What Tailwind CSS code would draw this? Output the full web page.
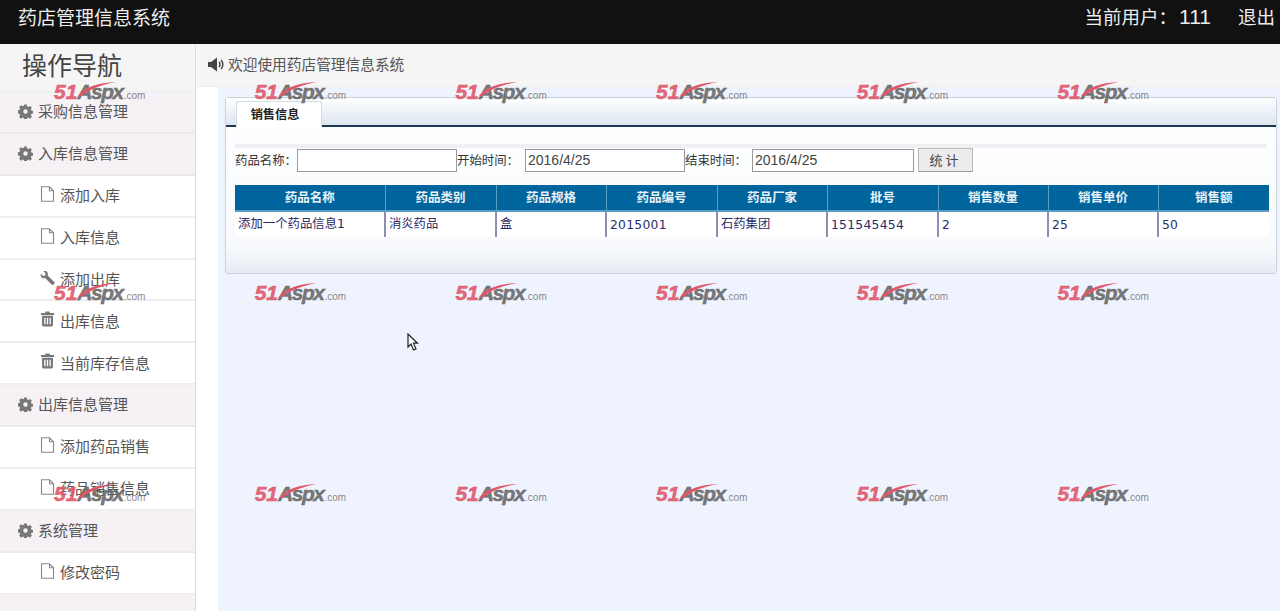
<!DOCTYPE html>
<html lang="zh-CN">
<head>
    <meta charset="UTF-8">
    <title>药店管理信息系统</title>
    <script src="https://cdn.jsdelivr.net/npm/@tailwindcss/browser@4"></script>
</head>
<body class="relative h-[611px] overflow-hidden bg-white font-['Noto_Sans_CJK_SC','Liberation_Sans',sans-serif]">

<!-- icons -->
<svg class="hidden">
    <symbol id="i-cog" viewBox="0 0 16 16"><path fill-rule="evenodd" d="M6.6 0.6h2.8l.4 2 1.2.5 1.8-1.1 2 2-1.1 1.8.5 1.2 2 .4v2.8l-2 .4-.5 1.2 1.1 1.8-2 2-1.8-1.1-1.2.5-.4 2H6.6l-.4-2-1.2-.5-1.8 1.1-2-2 1.1-1.8-.5-1.2-2-.4V6.6l2-.4.5-1.2L1.2 3.2l2-2L5 2.3l1.2-.5zM8 5.6a2.4 2.4 0 1 0 0 4.8 2.4 2.4 0 0 0 0-4.8z"/></symbol>
    <symbol id="i-file" viewBox="0 0 14 16"><path fill="none" stroke="currentColor" stroke-width="1.1" d="M1 .8h8l4 4v10.4H1zM9 .8v4h4"/></symbol>
    <symbol id="i-wrench" viewBox="0 0 16 16"><path d="M1 3.4l2.4 2.4 2-.6.6-2L3.6.8C5.4.1 7.2.6 8 2c.6 1 .6 2.2.2 3.2l7 7c.6.6.6 1.6 0 2.2l-.6.6c-.6.6-1.6.6-2.2 0l-7-7c-1 .4-2.4.3-3.4-.4C.7 6.600.400 4.900 1 3.400z"/></symbol>
    <symbol id="i-trash" viewBox="0 0 16 16"><path fill-rule="evenodd" d="M6 0h4l.7 1.600H15v2H1v-2h4.300zM2.200 4.600h11.600V14.400c0 .9-.7 1.600-1.600 1.600H3.800c-.9 0-1.600-.7-1.600-1.600zM4.500 6.600v7h1.400v-7zm2.800 0v7h1.400v-7zm2.800 0v7h1.400v-7z"/></symbol>
    <symbol id="i-sound" viewBox="0 0 17 14"><path d="M0 4.500h3L9 0v14L3 9.500H0z"/><path fill="none" stroke="currentColor" stroke-width="1.500" d="M11 4.500c1.300 1.300 1.300 3.700 0 5M13 2.500c2.400 2.400 2.400 6.600 0 9"/></symbol>
</svg>

<header class="flex h-[44px] items-center justify-between bg-[#111111] pb-[10px] pl-[18px] pr-[5px] text-[#eeeeee]">
    <h1 class="text-[19px] font-normal">药店管理信息系统</h1>
    <div class="flex items-center text-[18.500px]">
        <span>当前用户：<span class="ml-[2px] font-['Liberation_Sans'] text-[21px]">111</span></span>
        <a class="ml-[27px]">退出</a>
    </div>
</header>

<div class="flex h-[567px]">
    <aside class="h-[567px] w-[196px] shrink-0 overflow-hidden border-r border-[#dddddd] bg-[#f5f5f5] text-[15px] text-[#555555]">
        <div class="flex h-[48px] items-center border-b border-[#eeeeee] pb-[6px] pl-[22px] text-[25px] text-[#444444]">操作导航</div>
        <div id="menu"></div>
    </aside>

    <main class="flex min-w-0 flex-1 flex-col">
        <div class="flex h-[43px] shrink-0 items-center border-b border-[#eeeeee] bg-[#f5f5f5] pb-[1px] pl-[12px] text-[14.700px] text-[#555555]">
            <svg class="mr-[3px] h-[15px] w-[17px] fill-[#444444] text-[#444444]"><use href="#i-sound"/></svg>
            欢迎使用药店管理信息系统
        </div>
        <div class="flex flex-1">
            <div class="w-[22px] bg-white"></div>
            <div class="min-w-0 flex-1 bg-[#eff3fe] pl-[7px] pr-[3px] pt-[10px]">
                <section class="flex h-[177px] flex-col rounded-[3px] border border-[#c8d0da] bg-gradient-to-b from-white via-[#f8fafd] via-85% to-[#e6ebf2]">
                    <div class="flex h-[29px] shrink-0 border-b-2 border-[#1c3850] bg-gradient-to-b from-white to-[#dde6f0] pl-[10px] pt-[3px]">
                        <div class="flex h-[26px] w-[86px] items-center justify-center rounded-t-[3px] border border-b-0 border-[#d5dbe3] bg-white pr-[8px] text-[12.200px] font-bold text-[#222222]">销售信息</div>
                    </div>

                    <div class="mx-[9px] mt-[17px] h-[4px] bg-[#eef0f4]"></div>
                    <form class="flex h-[24px] items-center pl-[9px] text-[12.400px] text-[#333333]">
                        <label class="w-[62px] shrink-0 whitespace-nowrap">药品名称：</label>
                        <input class="h-[23px] w-[160px] border border-[#999999] bg-white">
                        <label class="w-[68px] shrink-0 whitespace-nowrap">开始时间：</label>
                        <input value="2016/4/25" class="h-[23px] w-[160px] border border-[#999999] bg-white pl-[2px] font-['Liberation_Sans'] text-[14px] text-[#444444]">
                        <label class="w-[67px] shrink-0 whitespace-nowrap">结束时间：</label>
                        <input value="2016/4/25" class="h-[23px] w-[162px] border border-[#999999] bg-white pl-[2px] font-['Liberation_Sans'] text-[14px] text-[#444444]">
                        <button type="button" class="ml-[4px] h-[24px] w-[55px] border border-[#bbbbbb] border-b-[#999999] bg-[#ececec] text-[13px] tracking-[3px] text-[#444444]">统计</button>
                    </form>

                    <table class="ml-[9px] mt-[13px] w-[1034px] table-fixed border-collapse text-[12.300px]">
                        <colgroup>
                            <col class="w-[150px]"><col class="w-[111px]"><col class="w-[110px]"><col class="w-[111px]"><col class="w-[110px]"><col class="w-[111px]"><col class="w-[110px]"><col class="w-[110px]"><col class="w-[111px]">
                        </colgroup>
                        <thead>
                            <tr class="h-[26px] bg-[#00659c] text-[12.500px] font-bold text-[#e8f2f8]">
                                <th class="border-b-2 border-[#5a9cc4]">药品名称</th>
                                <th class="border-b-2 border-l border-[#5a9cc4]">药品类别</th>
                                <th class="border-b-2 border-l border-[#5a9cc4]">药品规格</th>
                                <th class="border-b-2 border-l border-[#5a9cc4]">药品编号</th>
                                <th class="border-b-2 border-l border-[#5a9cc4]">药品厂家</th>
                                <th class="border-b-2 border-l border-[#5a9cc4]">批号</th>
                                <th class="border-b-2 border-l border-[#5a9cc4]">销售数量</th>
                                <th class="border-b-2 border-l border-[#5a9cc4]">销售单价</th>
                                <th class="border-b-2 border-l border-[#5a9cc4]">销售额</th>
                            </tr>
                        </thead>
                        <tbody class="bg-white text-[#2b2a6b]">
                            <tr class="h-[26px]">
                                <td class="pl-[3px] font-['DejaVu_Sans','Noto_Sans_CJK_SC'] text-[12.400px]">添加一个药品信息1</td>
                                <td class="border-l-2 border-[#8d90b0] pb-[2px] pl-[3px]">消炎药品</td>
                                <td class="border-l-2 border-[#8d90b0] pb-[2px] pl-[3px]">盒</td>
                                <td class="border-l-2 border-[#8d90b0] pl-[3px] pt-[2px] font-['DejaVu_Sans'] tracking-[.3px]">2015001</td>
                                <td class="border-l-2 border-[#8d90b0] pb-[2px] pl-[3px]">石药集团</td>
                                <td class="border-l-2 border-[#8d90b0] pl-[3px] pt-[2px] font-['DejaVu_Sans'] tracking-[.3px]">151545454</td>
                                <td class="border-l-2 border-[#8d90b0] pl-[3px] pt-[2px] font-['DejaVu_Sans'] tracking-[.3px]">2</td>
                                <td class="border-l-2 border-[#8d90b0] pl-[3px] pt-[2px] font-['DejaVu_Sans'] tracking-[.3px]">25</td>
                                <td class="border-l-2 border-[#8d90b0] pl-[3px] pt-[2px] font-['DejaVu_Sans'] tracking-[.3px]">50</td>
                            </tr>
                        </tbody>
                    </table>
                </section>
            </div>
        </div>
    </main>
</div>

<!-- watermark -->
<div id="marks" class="pointer-events-none absolute left-[54px] top-[81px] grid grid-cols-[repeat(6,200.700px)] grid-rows-[201px_201px_22px]"></div>

<!-- mouse pointer -->
<svg class="absolute left-[407px] top-[333px] h-[18px] w-[12px]" viewBox="0 0 12 18"><path d="M1 1v13l3-3 2.500 6 2.500-1-2.500-5.800H10.500z" fill="#ffffff" stroke="#222222" stroke-width="1.200"/></svg>

<script>
    const menu = [
        ['g', 'i-cog', '采购信息管理'],
        ['g', 'i-cog', '入库信息管理'],
        ['s', 'i-file', '添加入库'],
        ['s', 'i-file', '入库信息'],
        ['s', 'i-wrench', '添加出库'],
        ['s', 'i-trash', '出库信息'],
        ['s', 'i-trash', '当前库存信息'],
        ['g', 'i-cog', '出库信息管理'],
        ['s', 'i-file', '添加药品销售'],
        ['s', 'i-file', '药品销售信息'],
        ['g', 'i-cog', '系统管理'],
        ['s', 'i-file', '修改密码']
    ];

    document.getElementById('menu').innerHTML = menu.map(([type, icon, text]) => {
        if (type === 'g') {
            return `<div class="flex h-[41.900px] items-center border-b-2 border-[#eaeaea] bg-[#f5f1f5] pb-[1px] pl-[18px]">
                <svg class="mr-[5px] h-[15px] w-[15px] fill-[#777777]"><use href="#${icon}"/></svg>${text}</div>`;
        }
        return `<div class="flex h-[41.900px] items-center border-b-2 border-[#eeeeee] bg-white pb-[1px] pl-[40px]">
            <svg class="mb-[3px] mr-[5px] h-[16px] w-[15px] fill-[#777777] text-[#888888]"><use href="#${icon}"/></svg>${text}</div>`;
    }).join('') + '<div class="h-[16px] bg-[#f5f1f5]"></div>';

    let marks = '';
    for (let i = 0; i < 18; i++) {
        marks += `<div class="relative h-[22px] w-[92px] whitespace-nowrap font-['Liberation_Sans'] leading-[22px]">
            <span class="text-[21px] font-bold italic text-[#e0566a]/90 [-webkit-text-stroke:0.5px_#e0566a]">51</span><span class="text-[21px] font-bold italic tracking-[-1.500px] text-[#666666]/90 [-webkit-text-stroke:0.4px_#666666]">Aspx</span><span class="ml-[1px] text-[10px] text-[#777777]/90">.com</span>
            <svg class="absolute left-[23px] top-0 h-[15px] w-[40px]" viewBox="0 0 40 15"><path d="M1 15C8 6 20 2 39 1 25 3.500 13 8 4 15z" fill="#e0566a"/></svg>
        </div>`;
    }
    document.getElementById('marks').innerHTML = marks;
</script>
</body>
</html>
